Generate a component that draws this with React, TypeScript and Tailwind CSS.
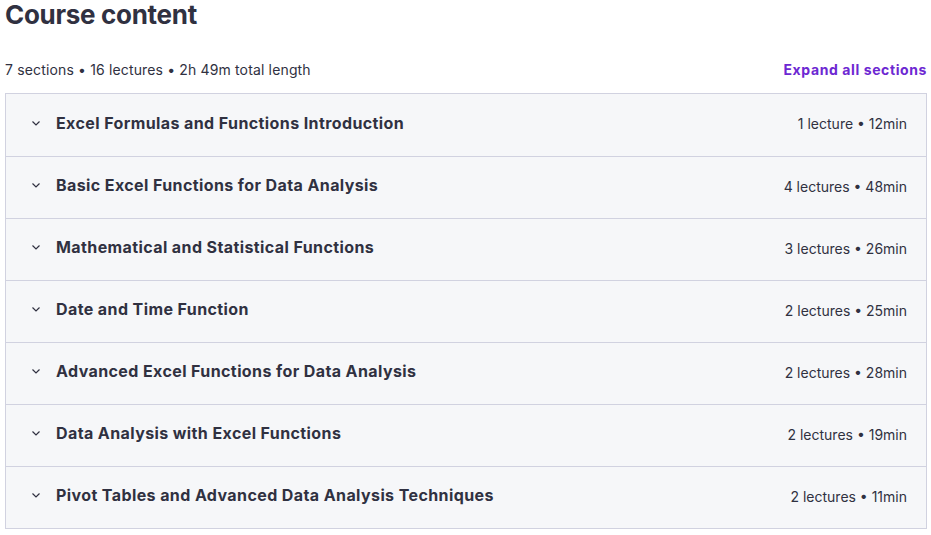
const sections = [
  { title: "Excel Formulas and Functions Introduction", meta: "1 lecture • 12min" },
  { title: "Basic Excel Functions for Data Analysis", meta: "4 lectures • 48min" },
  { title: "Mathematical and Statistical Functions", meta: "3 lectures • 26min" },
  { title: "Date and Time Function", meta: "2 lectures • 25min" },
  { title: "Advanced Excel Functions for Data Analysis", meta: "2 lectures • 28min" },
  { title: "Data Analysis with Excel Functions", meta: "2 lectures • 19min" },
  { title: "Pivot Tables and Advanced Data Analysis Techniques", meta: "2 lectures • 11min" },
];

function Chevron() {
  return (
    <svg width="12" height="12" viewBox="0 0 12 12" className="text-[#303141]">
      <path d="M2.5 4.5l3.5 3.5 3.5-3.5" fill="none" stroke="currentColor" strokeWidth="1.2" />
    </svg>
  );
}

export default function App() {
  return (
    <div className="h-[535px] w-[931px] overflow-hidden bg-white pl-[5px] pr-[4px] font-['Inter',sans-serif] text-[#303141]">
      <h2 className="-mt-[1px] text-[26px] font-bold leading-[32px] tracking-[-0.3px]">Course content</h2>
      <div className="mt-[29px] flex items-center justify-between">
        <span className="text-[14px] leading-[20px] tracking-[0.15px]">7 sections • 16 lectures • 2h 49m total length</span>
        <button className="text-[14px] font-bold leading-[20px] tracking-[0.6px] text-[#6d28d2]">Expand all sections</button>
      </div>
      <div className="mt-[13px] w-[922px] border border-[#d1d2e0]">
        {sections.map((s, i) => (
          <div
            key={s.title}
            className={`flex h-[62px] items-center justify-between bg-[#f6f7f9] pl-[24px] pr-[19px] ${i > 0 ? "border-t border-[#d1d2e0]" : ""}`}
          >
            <div className="-mt-[5px] flex items-center gap-[14px]">
              <Chevron />
              <span className="text-[16px] font-bold leading-[24px] tracking-[0.4px]">{s.title}</span>
            </div>
            <span className="-mt-[2px] text-[14px] leading-[20px]">{s.meta}</span>
          </div>
        ))}
      </div>
    </div>
  );
}
